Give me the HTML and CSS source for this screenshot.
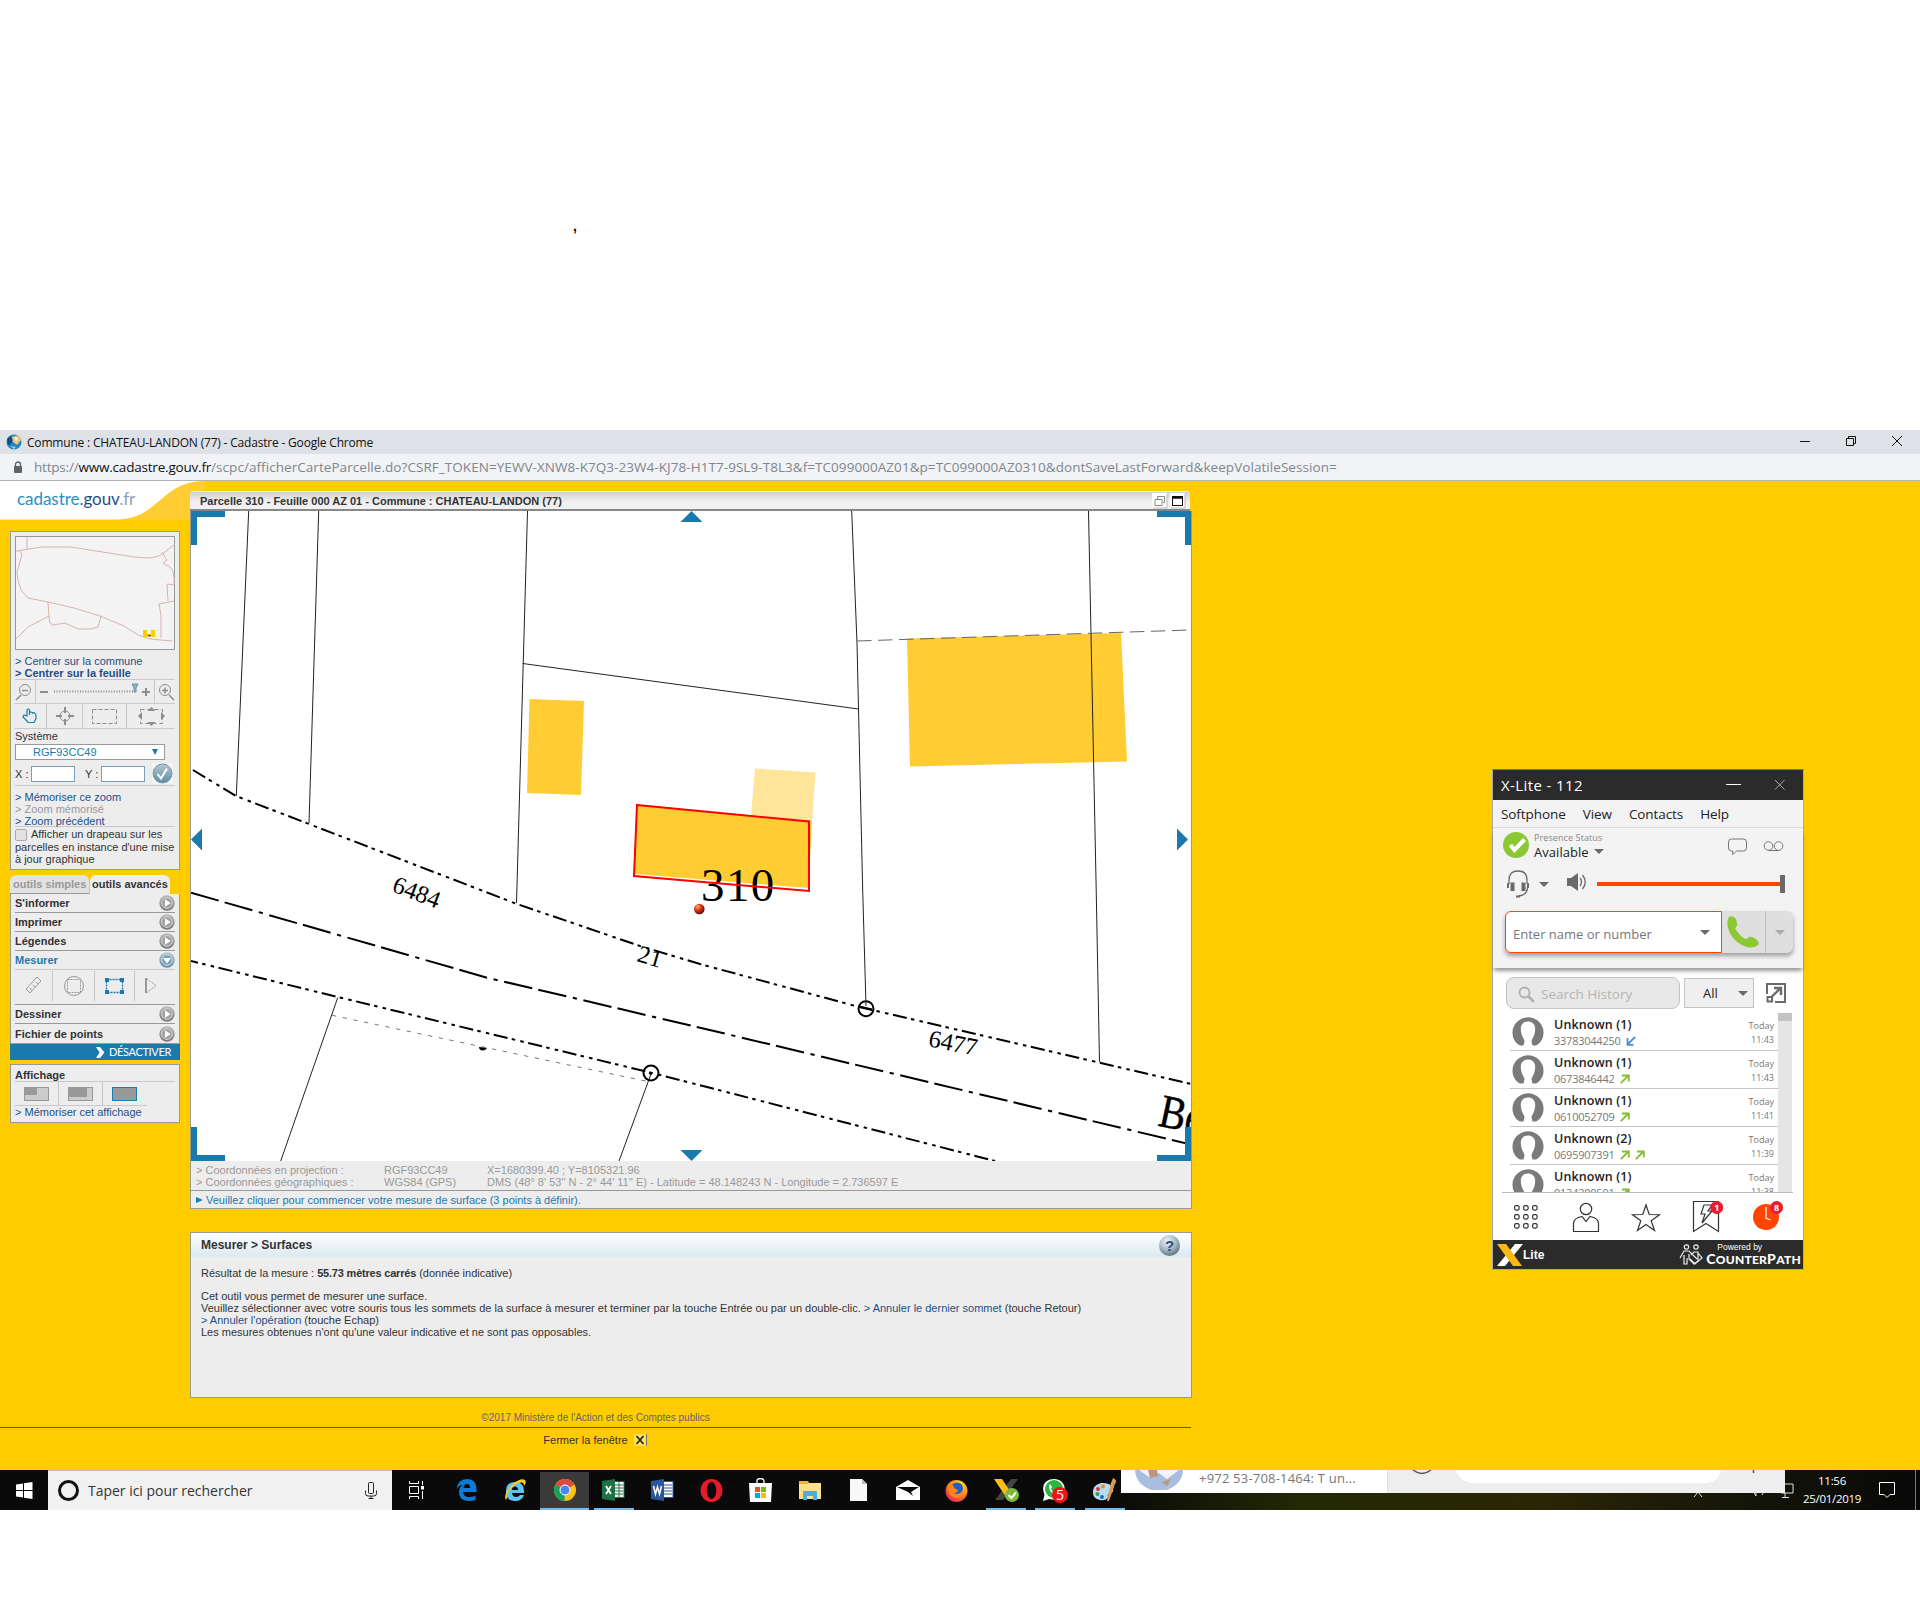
FILE: index.html
```html
<!DOCTYPE html>
<html lang="fr">
<head>
<meta charset="utf-8">
<title>Commune : CHATEAU-LANDON (77) - Cadastre</title>
<link rel="stylesheet" href="styles.css">
</head>
<body>
<svg width="0" height="0" class="defs">
  <defs>
    <linearGradient id="gr" x1="0" y1="0" x2="0" y2="1"><stop offset="0" stop-color="#bbb"/><stop offset="1" stop-color="#777"/></linearGradient>
    <linearGradient id="gb" x1="0" y1="0" x2="0" y2="1"><stop offset="0" stop-color="#b5c9d4"/><stop offset="1" stop-color="#5e8ba5"/></linearGradient>
    <radialGradient id="ball" cx=".35" cy=".3" r=".8"><stop offset="0" stop-color="#ffb090"/><stop offset=".4" stop-color="#e03a10"/><stop offset="1" stop-color="#400"/></radialGradient>
    <radialGradient id="fox" cx=".7" cy=".2" r=".9"><stop offset="0" stop-color="#ffe226"/><stop offset=".5" stop-color="#ff8a16"/><stop offset="1" stop-color="#e5215a"/></radialGradient>
    <radialGradient id="help" cx=".4" cy=".3" r=".8"><stop offset="0" stop-color="#eef3f6"/><stop offset=".5" stop-color="#a9b9c2"/><stop offset="1" stop-color="#4f6470"/></radialGradient>
    <symbol id="play" viewBox="0 0 16 16"><circle cx="8" cy="8" r="7.7" fill="url(#gr)"/><circle cx="8" cy="8" r="5.4" fill="#a2a2a2" stroke="#d5d5d5"/><path d="M6 4.3v7.4L11.6 8z" fill="#fff"/></symbol>
    <symbol id="playdown" viewBox="0 0 16 16"><circle cx="8" cy="8" r="7.7" fill="url(#gb)"/><circle cx="8" cy="8" r="5.4" fill="#7fa3b8" stroke="#cddbe3"/><path d="M4 6h8l-4 5.4z" fill="#fff"/></symbol>
    <symbol id="head" viewBox="0 0 32 30"><path d="M11.5 28.5C12 26 13 24.500 12 22.500C10 19 8.800 16 8.800 12C8.800 7 12 4.500 16 4.500S23.200 7 23.200 12C23.200 16 22 19 20 22.500C19 24.500 20 26 20.500 28.500L24 28.500C29 26 31.500 21 31.500 15.800A15.500 15.500 0 0 0 .5 15.800C.5 21 3 26 8 28.500Z" fill="#7a7a7a"/></symbol>
    <symbol id="out" viewBox="0 0 10 10"><path d="M.8 9.200L8 2M2 1.500h6.800v6" fill="none" stroke="#84bd35" stroke-width="1.800"/></symbol>
    <symbol id="in" viewBox="0 0 10 10"><path d="M9.200.8L2 8M1.500 2v6.800h6" fill="none" stroke="#4a90d0" stroke-width="1.800"/></symbol>
  </defs>
</svg>

<header class="blank"><span class="mark">,</span></header>

<section class="browser">
  <div class="titlebar">
    <svg width="16" height="16" viewBox="0 0 16 16"><circle cx="8" cy="8" r="7.500" fill="#1c86c8"/><path d="M1 5L4 2l3 3-2 5-3 1z" fill="#0b4e86"/><path d="M6 3l7-2 2 5-4 5-4-3z" fill="#f3c37b"/><path d="M8 3l4 1-2 3z" fill="#fff"/><path d="M4 12l6 1-2 2z" fill="#8fd0ef"/></svg>
    <span class="t">Commune : CHATEAU-LANDON (77) - Cadastre - Google Chrome</span>
    <svg class="winbtns" width="110" height="14" viewBox="0 0 110 14" fill="none" stroke="#111" shape-rendering="auto"><path d="M4 7.500h10"/><path d="M50.500 4.500h7v7h-7zM52.500 4.500v-2h7v7h-2"/><path d="M96 2l10 10M106 2L96 12"/></svg>
  </div>
  <div class="urlbar">
    <svg width="10" height="13" viewBox="0 0 10 13"><path d="M2.500 6V3.500a2.500 2.500 0 0 1 5 0V6" fill="none" stroke="#5f6368" stroke-width="1.400"/><rect x="1" y="5" width="8" height="7" rx="1" fill="#5f6368"/></svg>
    <span class="url">https://<b>www.cadastre.gouv.fr</b><span class="path">/scpc/afficherCarteParcelle.do?CSRF_TOKEN=YEWV-XNW8-K7Q3-23W4-KJ78-H1T7-9SL9-T8L3&amp;f=TC099000AZ01&amp;p=TC099000AZ0310&amp;dontSaveLastForward&amp;keepVolatileSession=</span></span>
  </div>

  <div class="page">
    <svg class="swoosh" width="205" height="39" viewBox="0 0 205 39"><path d="M116 39C160 39 160 0 205 0V39z" fill="#ffcc33"/><path d="M0 0H205C160 0 160 38.500 116 38.500H0z" fill="#fff"/></svg>
    <div class="logo"><span class="c1">cadastre</span>.<span class="c2">gouv</span><span class="c3">.fr</span></div>
    <div class="cols">
      <aside>
        <div class="box nav">
          <svg class="mini" width="160" height="114" viewBox="15 536 160 114"><rect x="15.500" y="536.500" width="159" height="113" fill="#f3f3f3" stroke="#999"/><g fill="none" stroke="#d3b5ac"><path d="M27 537v12M16 551l26-4h29l63 10 13 1q11 0 18-6l10-8M20 551l2 3-5 18q0 8 4 18l7 8 20 4 26 6 26 8 24 10 14 9 12 4 22 2M162 552l5 8-4 3 7 4q5 5 4 17M174 585l-7-1 1 17M174 601l-15 3 2 12v22M48 602l1 14-21 11-12 12M49 616q0 8 4 9l12-2 13 6h12l8-2 3-11"/></g><path d="M143 630h4v4h4v-4h4v7h-3l-2-2-3 2h-4z" fill="#fc0"/><path d="M147 635h4l-1 2z" fill="#733"/></svg>
          <div class="lnk l1">&gt; Centrer sur la commune</div>
          <div class="lnk bold">&gt; Centrer sur la feuille</div>
          <svg class="tools" width="160" height="50" viewBox="15 679 160 50" fill="none" stroke="#8d8d8d">
            <path d="M15 679.500h160M15 703.500h160M15 728.500h160M35.500 680v23M154.500 680v23M46.500 704v24M82.500 704v24M126.500 704v24" stroke="#c8c8c8"/>
            <circle cx="25" cy="690" r="5.500"/><path d="M22 690.500h6M21 695l-5 5" stroke-width="1.500"/>
            <circle cx="165" cy="690" r="5.500"/><path d="M162 690.500h6M165 687.500v6M169 695l5 5" stroke-width="1.500"/>
            <path d="M40 692h8M142 692h8M146 688v8" stroke-width="2"/><path d="M54 691.500h80" stroke-width="2" stroke-dasharray="1 1.600"/><path d="M132 684h6l-2 4v4h-2v-4z" fill="#90aebf" stroke="#6d94a8"/>
            <path d="M27 721l-4-4 1-2 3 1v-6q1-2 2.500 0v5-2q1.500-2 3 0 1-1 2.500.5 1 0 1 2v3l-2 4h-6z" stroke="#1a7aad" stroke-width="1.200"/>
            <circle cx="65" cy="716" r="5"/><path d="M65 707v6M65 719v6M56 716h6M68 716h6" stroke-width="2"/>
            <rect x="92.500" y="709.500" width="24" height="14" stroke-dasharray="4 2"/><rect x="140.500" y="709.500" width="22" height="14" stroke-dasharray="4 3"/>
            <path d="M151.500 707l-4 4h8zM151.500 726l-4-4h8zM138 716l4-4v8zM165 716l-4-4v8z" fill="#8d8d8d" stroke="none"/>
          </svg>
          <div class="sys">Système</div>
          <div class="select"><span>RGF93CC49</span><i></i></div>
          <div class="xy"><span class="lx">X :</span><i></i><span class="ly">Y :</span><i></i><svg width="21" height="21" viewBox="0 0 21 21"><rect width="21" height="21" fill="#f6f6f6"/><circle cx="10.500" cy="10.500" r="9.500" fill="url(#gb)" stroke="#7895a5"/><path d="M5.500 11l3.500 4.500 6-10" fill="none" stroke="#fff" stroke-width="2"/></svg></div>
          <div class="mem"><div class="lnk">&gt; Mémoriser ce zoom</div><div class="lnk off">&gt; Zoom mémorisé</div><div class="lnk">&gt; Zoom précédent</div></div>
          <div class="flag"><i></i>Afficher un drapeau sur les<br>parcelles en instance d'une mise<br>à jour graphique</div>
        </div>
        <div class="tabs"><span class="tab dim">outils simples</span><span class="tab">outils avancés</span></div>
        <div class="box adv">
          <div class="row">S'informer<svg width="16" height="16"><use href="#play"/></svg></div>
          <div class="row">Imprimer<svg width="16" height="16"><use href="#play"/></svg></div>
          <div class="row">Légendes<svg width="16" height="16"><use href="#play"/></svg></div>
          <div class="row on">Mesurer<svg width="16" height="16"><use href="#playdown"/></svg></div>
          <svg class="meas" width="160" height="34" viewBox="15 969 160 34" fill="none" stroke="#999"><path d="M52.500 970v30M94.500 970v30M134.500 970v30" stroke="#c8c8c8"/><path d="M26 988l11-12 4 4-11 12zM30 987l2 2M33 984l2 2M36 981l2 2"/><circle cx="74" cy="985" r="9.500"/><rect x="67.500" y="978.500" width="13" height="13" stroke-dasharray="2 1"/><rect x="106.500" y="978.500" width="16" height="13" stroke="#1a7aad" stroke-width="1.300" stroke-dasharray="2 1"/><path d="M105 977h4v4h-4zM120 977h4v4h-4zM105 989h4v4h-4zM120 989h4v4h-4z" fill="#1a7aad" stroke="none"/><path d="M146 977v15" stroke-width="2"/><path d="M147 978l9 6.500-9 7" stroke-dasharray="2 1"/></svg>
          <div class="row top">Dessiner<svg width="16" height="16"><use href="#play"/></svg></div>
          <div class="row last">Fichier de points<svg width="16" height="16"><use href="#play"/></svg></div>
        </div>
        <div class="desact"><svg width="9" height="11" viewBox="0 0 9 11"><path d="M0 0h4l4.500 5.500L4 11H0l3.500-5.500z" fill="#fff"/></svg>DÉSACTIVER</div>
        <div class="box aff">
          <div class="afft">Affichage</div>
          <svg width="160" height="25" viewBox="15 1081 160 25"><path d="M15 1081.500h160M15 1105.500h132M58.500 1082v24M102.500 1082v24" stroke="#c8c8c8"/><g fill="#ccc" stroke="#999"><rect x="24.500" y="1087.500" width="24" height="13"/><rect x="68.500" y="1087.500" width="24" height="13"/></g><path d="M24 1087h13v8H24zM68 1087h19v10H68z" fill="#999"/><rect x="112.500" y="1087.500" width="24" height="13" fill="#999" stroke="#1a7aad"/></svg>
          <div class="lnk">&gt; Mémoriser cet affichage</div>
        </div>
      </aside>

      <main>
        <div class="maphead"><b>Parcelle 310 - Feuille 000 AZ 01 - Commune : CHATEAU-LANDON (77)</b>
          <svg width="34" height="16" viewBox="0 0 34 16"><rect width="15" height="15" fill="#fff"/><rect x="18" width="15" height="15" fill="#fff"/><path d="M15 1v14H1M33 1v14H19" fill="none" stroke="#bbb"/><path d="M3 6.500h7v6H3zM5.500 6V3.500h7v6H11" fill="none" stroke="#888"/><rect x="20.500" y="3.500" width="10" height="9" fill="none" stroke="#111"/><path d="M20 4.500h11" stroke="#111" stroke-width="2.500"/></svg>
        </div>
        <div class="mapwrap">
          <svg class="map" width="1000" height="650" viewBox="191 511 1000 650">
            <g fill="#ffcc33"><path d="M529.500 699L584 701 581 795 527 793z"/><path d="M907 638.500L1121 633 1127 761.500 910 766.500z"/><path d="M755 768.500L815.500 772.500 812 822 751 815z" fill="#ffe599"/><path d="M637 805L812 821 808.500 888 634.500 874z"/></g>
            <g fill="none" stroke="#222" stroke-width="1"><path d="M248.700 511L236.300 796M318.700 511L309 823M527.500 511L516.500 903M522.700 663.500L858.500 709M851.700 511L857 643 858.500 709 862.700 890 866 1006M1088.500 511L1096 880 1099.500 1062M337.700 997.700L280.700 1161M651 1074L619 1161"/>
              <path d="M857 641L1190 630" stroke="#666" stroke-dasharray="14.500 6.500"/><path d="M332 1015.300L646.700 1081.300" stroke="#777" stroke-dasharray="4.300 6.600"/></g>
            <g fill="none" stroke="#000" stroke-width="2">
              <path d="M193 770L236 796 309 824 517 904 640 946 700 964 858 1006.700 1098 1062.300 1191 1084" stroke-dasharray="14.200 4.300 3.500 5.300 3.500 4.600"/>
              <path d="M191 892.700L487 977.700 700 1027.700 1191 1144.500" stroke-dasharray="28.800 6.200 28.800 6.700 4.200 6.700"/>
              <path d="M191 961L336.700 996.700 651 1072.700 995 1161" stroke-dasharray="14.200 4.300 3.500 5.300 3.500 4.600" stroke-dashoffset="7"/>
              <circle cx="651" cy="1073" r="7.500"/><circle cx="866" cy="1008.700" r="7.500"/><path d="M859 1006.500l13 3M649 1073l3 1"/></g>
            <path d="M479 1047l8 1q-2 3-5 2.500-3-1-3-3.500z"/>
            <g class="maptext"><text font-size="47" letter-spacing="1.400" x="701" y="901">310</text><text font-size="24.500" transform="translate(391 891) rotate(21)">6484</text><text font-size="24.500" transform="translate(636 961) rotate(16)">21</text><text font-size="24.500" transform="translate(927.500 1046) rotate(11.500)">6477</text><text font-size="47" stroke="#000" stroke-width=".5" transform="translate(1157 1125.500) rotate(12) scale(.84 1)">Be</text></g>
            <path d="M637 805L809 821.500V891L634 876z" fill="none" stroke="#f00" stroke-width="2"/>
            <circle cx="699.300" cy="909" r="5.300" fill="url(#ball)"/>
            <path fill="#1a7aad" d="M191 511h34v6h-28v28h-6zM1157 511h34v34h-6v-28h-28zM191 1127h6v28h28v6h-34zM1185 1127h6v34h-34v-6h28zM691.500 511l11 11h-22zM691.500 1161l11-11h-22zM191 839.500l11-11v22zM1188 839.500l-11-11v22z"/>
          </svg>
          <div class="coords"><span>&gt; Coordonnées en projection :</span><span>RGF93CC49</span><span>X=1680399.40 ; Y=8105321.96</span><span>&gt; Coordonnées géographiques :</span><span>WGS84 (GPS)</span><span>DMS (48° 8' 53'' N - 2° 44' 11'' E) - Latitude = 48.148243 N - Longitude = 2.736597 E</span></div>
          <div class="hint"><i></i>Veuillez cliquer pour commencer votre mesure de surface (3 points à définir).</div>
        </div>
        <div class="result">
          <div class="rhead"><b>Mesurer &gt; Surfaces</b><svg width="23" height="23" viewBox="0 0 23 23"><circle cx="11.500" cy="11.500" r="10.500" fill="url(#help)"/><text x="7" y="17" font-size="15" font-weight="bold" fill="#1d4f86">?</text></svg></div>
          <div class="rbody">
            <p>Résultat de la mesure : <b>55.73 mètres carrés</b> (donnée indicative)</p>
            <p class="sp">Cet outil vous permet de mesurer une surface.</p>
            <p class="long">Veuillez sélectionner avec votre souris tous les sommets de la surface à mesurer et terminer par la touche Entrée ou par un double-clic. <a>&gt; Annuler le dernier sommet</a> (touche Retour)</p>
            <p><a>&gt; Annuler l'opération</a> (touche Echap)</p>
            <p>Les mesures obtenues n'ont qu'une valeur indicative et ne sont pas opposables.</p>
          </div>
        </div>
      </main>
    </div>
    <div class="copy">©2017 Ministère de l'Action et des Comptes publics</div>
    <div class="close">Fermer la fenêtre<svg width="14" height="12" viewBox="0 0 14 12"><rect width="13" height="12" fill="#ffdf5a"/><path d="M2.500 2l7 8M9.500 2l-7 8" stroke="#222" stroke-width="1.700"/><path d="M12.500 0v12" stroke="#776"/></svg></div>
  </div>
</section>

<section class="xlite">
  <div class="xtitle"><span>X-Lite - 112</span><svg width="60" height="12" viewBox="0 0 60 12" fill="none"><path d="M0 5.500h15" stroke="#fff"/><path d="M49 1l9.500 9.500M58.500 1L49 10.500" stroke="#aaa"/></svg></div>
  <div class="xmenu"><span>Softphone</span><span>View</span><span>Contacts</span><span>Help</span></div>
  <div class="xtop">
    <div class="pres">
      <svg width="26" height="26" viewBox="0 0 26 26"><circle cx="13" cy="13" r="13" fill="#8bc834"/><path d="M7.500 13l4 5 10-10.500" fill="none" stroke="#fff" stroke-width="4"/></svg>
      <div class="ptxt"><small>Presence Status</small><span>Available<i class="dn"></i></span></div>
      <svg class="pi" width="56" height="18" viewBox="0 0 56 18" fill="none" stroke="#777"><path d="M3.500 1h12q3 0 3 3v6q0 3-3 3h-7l-4 3.500.3-3.500H3.500q-3 0-3-3V4q0-3 3-3z"/><circle cx="40.500" cy="8" r="4.300"/><circle cx="50.500" cy="8" r="4.300"/><path d="M40 12.500h11"/></svg>
    </div>
    <div class="vol">
      <svg width="22" height="28" viewBox="0 0 22 28" fill="none" stroke="#6a6a6a"><path d="M2 14V10q0-9 9-9t9 9v4" stroke-width="1.300"/><path d="M20.500 17q0 8-9 9" stroke-width="1.300"/><rect x="4" y="13" width="3" height="7.500" fill="#6a6a6a"/><rect x="15" y="13" width="3" height="7.500" fill="#6a6a6a"/><path d="M1 13v5M21 13v5M9 26.500h4" stroke-width="2"/></svg>
      <i class="dn"></i>
      <svg class="spk" width="20" height="20" viewBox="0 0 20 20"><path d="M0 6h4l7-5v18l-7-5H0z" fill="#6a6a6a"/><path d="M13 6q3 4 0 8M15.500 3q5.500 7 0 14" fill="none" stroke="#6a6a6a" stroke-width="1.300"/></svg>
      <div class="bar"></div><div class="knob"></div>
    </div>
    <div class="dial"><div class="inp">Enter name or number<i class="dn"></i></div><div class="call"><svg width="33" height="32" viewBox="0 0 33 32"><path d="M2 1q4-2 7 2l1.500 6q-3 3-2 4 4 7 10 10 2 0 3.500-2 3-1 8 3 3 3 1 5-7 5-16 0Q3 23 .5 10 0 3 2 1z" fill="#8bc834"/></svg></div><div class="calld"><i class="dn lt"></i></div></div>
  </div>
  <div class="hist">
    <div class="search"><div class="sin"><svg width="17" height="17" viewBox="0 0 17 17" fill="none" stroke="#b0b0b0"><circle cx="6.500" cy="6.500" r="5" stroke-width="1.800"/><path d="M10 10l6 6" stroke-width="2.500"/></svg>Search History</div><div class="all">All<i class="dn"></i></div><svg width="20" height="20" viewBox="0 0 20 20" fill="none" stroke="#6a6a6a" stroke-width="2"><path d="M1 11V1h18v18H9"/><rect x="1.500" y="14" width="4.500" height="4.500"/><path d="M6 13.500l8.500-8.500M8 5h7v7" stroke-width="2.400"/></svg></div>
    <div class="list">
      <div class="items">
        <div class="it"><svg width="32" height="30"><use href="#head"/></svg><div class="who"><b>Unknown (1)</b><span>33783044250 <svg width="10" height="10"><use href="#in"/></svg></span></div><div class="when">Today<br>11:43</div></div>
        <div class="it"><svg width="32" height="30"><use href="#head"/></svg><div class="who"><b>Unknown (1)</b><span>0673846442 <svg width="10" height="10"><use href="#out"/></svg></span></div><div class="when">Today<br>11:43</div></div>
        <div class="it"><svg width="32" height="30"><use href="#head"/></svg><div class="who"><b>Unknown (1)</b><span>0610052709 <svg width="10" height="10"><use href="#out"/></svg></span></div><div class="when">Today<br>11:41</div></div>
        <div class="it"><svg width="32" height="30"><use href="#head"/></svg><div class="who"><b>Unknown (2)</b><span>0695907391 <svg width="10" height="10"><use href="#out"/></svg> <svg width="10" height="10"><use href="#out"/></svg></span></div><div class="when">Today<br>11:39</div></div>
        <div class="it"><svg width="32" height="30"><use href="#head"/></svg><div class="who"><b>Unknown (1)</b><span>0134200591 <svg width="10" height="10"><use href="#out"/></svg></span></div><div class="when">Today<br>11:38</div></div>
      </div>
      <div class="sb"><i></i></div>
    </div>
    <svg class="xnav" width="310" height="47" viewBox="1493 1193 310 47" fill="none" stroke="#333" stroke-width="1.200"><g><rect x="1514.600" y="1205.600" width="4.500" height="4.500" rx="1.500"/><rect x="1523.600" y="1205.600" width="4.500" height="4.500" rx="1.500"/><rect x="1532.600" y="1205.600" width="4.500" height="4.500" rx="1.500"/><rect x="1514.600" y="1214.600" width="4.500" height="4.500" rx="1.500"/><rect x="1523.600" y="1214.600" width="4.500" height="4.500" rx="1.500"/><rect x="1532.600" y="1214.600" width="4.500" height="4.500" rx="1.500"/><rect x="1514.600" y="1223.600" width="4.500" height="4.500" rx="1.500"/><rect x="1523.600" y="1223.600" width="4.500" height="4.500" rx="1.500"/><rect x="1532.600" y="1223.600" width="4.500" height="4.500" rx="1.500"/></g><circle cx="1586" cy="1209" r="5.700"/><path d="M1582 1216.500q-8.500 1.500-8.500 7v8h25v-8q0-5.500-8.500-7l-4 5z"/><path d="M1646 1205l3.200 9.500 10.300.2-8.300 6 3.300 9.800-8.500-6-8.500 6 3.300-9.800-8.300-6 10.300-.2z"/><path d="M1693.500 1201.500h25v30l-12.500-8-12.500 8zM1704 1205h8l-4 6h4l-10 12 3-9h-4z"/><circle cx="1766" cy="1217" r="13" fill="#ff4500" stroke="none"/><path d="M1766 1207v11l4.500 2" stroke="#fff"/><g stroke="none"><circle cx="1716.700" cy="1207.500" r="6.500" fill="#ed1c2e"/><circle cx="1776.600" cy="1207.500" r="6.500" fill="#ed1c2e"/><g fill="#fff" font-size="9" font-weight="bold"><text x="1714.200" y="1210.800">1</text><text x="1774" y="1210.800">8</text></g></g></svg>
  </div>
  <div class="xfoot"><svg width="27" height="22" viewBox="0 0 27 22"><path d="M18 0h8L8 22H0z" fill="#fff"/><path d="M0 0h9l16 22h-9z" fill="#fbb813"/></svg><span class="lite">Lite</span>
    <svg class="cp" width="24" height="22" viewBox="0 0 24 22" fill="none" stroke="#eee" stroke-width="1.200"><circle cx="7.500" cy="3" r="2.200"/><circle cx="17" cy="3" r="2.200"/><path d="M1 14l4-7h5l8 8M5 11v9h3v-6M10 10v5l5 5 4-3V8h-4l-3 3M19 9l4 5-7 6-5-5"/></svg><div class="cpt"><small>Powered by</small><b>C<span>OUNTER</span>P<span>ATH</span></b></div></div>
</section>

<footer class="taskbar">
  <div class="start"><svg width="17" height="17" viewBox="0 0 17 17" fill="#fff"><path d="M0 2.400L7 1.400V8H0zM8 1.200L16.500 0V8H8zM0 9h7v6.600l-7-1zM8 9h8.500v8L8 15.800z"/></svg></div>
  <div class="tsearch"><i></i><span>Taper ici pour rechercher</span><svg width="12" height="18" viewBox="0 0 12 18" fill="none" stroke="#222"><rect x="3.500" y=".5" width="5" height="11" rx="1"/><path d="M.5 8.500v3q0 2.500 2.500 2.500h6q2.500 0 2.500-2.500v-3M6 14v3M3.500 16.500h5"/></svg></div>
  <div class="apps">
    <div class="app"><svg width="18" height="18" viewBox="0 0 18 18" fill="none" stroke="#fff"><path d="M1.500 0v2.500h9V0M1.500 18v-2.500h9V18M1.500 5.500h9v7h-9zM14.500 0v4M14.500 10v8"/><path d="M13 5h3v3.500h-3z" fill="#fff" stroke="none"/></svg></div>
    <div class="app"><svg width="21" height="22" viewBox="0 0 21 22"><path d="M.5 10Q2 0 11 0q9 0 9.500 9v4H7q.5 5 6 5 4 0 6.500-1.500v4Q17 22 13 22 3 22 3 13q0-5 4-7-4 0-6.500 4zM7.500 9H14q0-4-3-4t-3.500 4z" fill="#0c7bd6" fill-rule="evenodd"/></svg></div>
    <div class="app"><svg width="24" height="24" viewBox="0 0 24 24"><path d="M3 13q0-9 9-9t9 9v2H9q.5 4 4 4 3 0 4-2h4q-2 6-9 6-9 0-9-10zm6-1h6q0-3.500-3-3.500T9 12z" fill="#5cc4f2" fill-rule="evenodd"/><path d="M3 22C-2 16 15-3 22 2q2 2-1 6 0-5-5-3C10 7 3 15 4 20z" fill="#fdc92b"/></svg></div>
    <div class="app act"><svg width="22" height="22" viewBox="0 0 22 22"><circle cx="11" cy="11" r="11" fill="#fbc116"/><path d="M11 11L1.500 5.500A11 11 0 0 1 20.500 5.500z" fill="#dd4b3e"/><path d="M11 11L1.500 5.500A11 11 0 0 0 10.500 22z" fill="#17a05e"/><circle cx="11" cy="11" r="5" fill="#4688f1" stroke="#fff"/></svg></div>
    <div class="app run"><svg width="23" height="22" viewBox="0 0 23 22"><rect x="11" y="2.500" width="11" height="16" fill="#fff" stroke="#1e7145"/><path d="M13 6h8M13 9h8M13 12h8M13 15h8M17 3v15" stroke="#1e7145"/><path d="M0 2L13 0v22L0 20z" fill="#1e7145"/><path d="M4 7l5 8M9 7l-5 8" stroke="#fff" stroke-width="1.800"/></svg></div>
    <div class="app"><svg width="23" height="22" viewBox="0 0 23 22"><rect x="11" y="2.500" width="11" height="16" fill="#fff" stroke="#2b579a"/><path d="M13 6h8M13 9h8M13 12h8M13 15h8" stroke="#2b579a"/><path d="M0 2L13 0v22L0 20z" fill="#2b579a"/><path d="M2.500 7l2 8L6.500 8l2 7 2-8" stroke="#fff" stroke-width="1.500" fill="none"/></svg></div>
    <div class="app"><svg width="23" height="23" viewBox="0 0 23 23"><ellipse cx="11.500" cy="11.500" rx="11" ry="11.500" fill="#e31b2b"/><ellipse cx="11.500" cy="11.500" rx="4.800" ry="8.500" fill="#0a0a0a"/></svg></div>
    <div class="app"><svg width="23" height="24" viewBox="0 0 23 24"><path d="M8 6V3q0-2.500 3.500-2.500T15 3v3" fill="none" stroke="#fff" stroke-width="1.300"/><path d="M0 5h23l-1 19H1z" fill="#fff"/><path d="M6 9h5v5H6z" fill="#f25022"/><path d="M12 9h5v5h-5z" fill="#7fba00"/><path d="M6 15h5v5H6z" fill="#00a4ef"/><path d="M12 15h5v5h-5z" fill="#ffb900"/></svg></div>
    <div class="app"><svg width="22" height="20" viewBox="0 0 22 20"><path d="M0 1h9l1 2h12v16H0z" fill="#ffe08a"/><path d="M0 1h9v3H0z" fill="#f2b632"/><path d="M4 20v-8q0-1 1-1h12q1 0 1 1v8h-4v-4H8v4z" fill="#3fb2ee"/></svg></div>
    <div class="app"><svg width="17" height="22" viewBox="0 0 17 22"><path d="M0 0h12l5 5v17H0z" fill="#f8f8f8"/><path d="M12 0v5h5z" fill="#bbb"/></svg></div>
    <div class="app"><svg width="24" height="20" viewBox="0 0 24 20"><path d="M0 7l12-7 12 7v13H0z" fill="#fff"/><path d="M1 7h22l-8 5 2 4-5-4z" fill="#0a0a0a"/></svg></div>
    <div class="app"><svg width="23" height="23" viewBox="0 0 23 23"><circle cx="11.500" cy="12" r="11" fill="url(#fox)"/><circle cx="12" cy="9.500" r="6" fill="#2160c0"/><path d="M3 5q6 0 6 4l4 2q-1 3-4 3 5 3 9-3 0 8-7 8-9-2-8-14z" fill="#ff8518"/></svg></div>
    <div class="app run"><svg width="25" height="24" viewBox="0 0 25 24"><path d="M17 1h7L9 22H1z" fill="#444"/><path d="M0 1h8l14 21h-8z" fill="#fcbc1c"/><circle cx="18" cy="17" r="7" fill="#7cba3b"/><path d="M14.500 17l3 3 4.500-5.500" stroke="#fff" stroke-width="2" fill="none"/></svg></div>
    <div class="app run"><svg width="26" height="25" viewBox="0 0 26 25"><path d="M1 23l1.500-6Q-2 5 8 1.500 18-1 22 7q3 10-6 14-4 1-9 0z" fill="#fff"/><circle cx="12" cy="11" r="9" fill="#2ab540"/><path d="M8 6l2 3-1 2q2 4 5 4l2-1.500 2 1.500q-2 3-5 2Q7 14 7 8z" fill="#fff"/><circle cx="18" cy="17" r="8" fill="#f01414"/><text x="14" y="22" font-size="14" fill="#fff">5</text></svg></div>
    <div class="app run"><svg width="25" height="24" viewBox="0 0 25 24"><path d="M1 16Q0 7 9 5q10-1 12 6 1 4-3 4-3 1-2 4-2 4-8 3-6-1-7-6z" fill="#b6dcf1"/><circle cx="6" cy="11" r="2" fill="#d33"/><circle cx="11" cy="8.500" r="2" fill="#e8872e"/><circle cx="5.500" cy="16" r="2" fill="#3b9b45"/><circle cx="10" cy="19" r="2" fill="#2f65b8"/><path d="M21 0q5 2 2 6l-6 17q-2 1-2-1l4-17z" fill="#d79a52"/></svg></div>
  </div>
  <div class="tray"><svg width="110" height="20" viewBox="0 0 110 20" fill="none" stroke="#ddd"><path d="M1 14l4-5 4 5M60 8l3 5v-5M69 12l3-5M84 5V1h16v9H88M92 10v4M89 14.500h7"/></svg></div>
  <div class="clock">11:56<br>25/01/2019</div>
  <svg class="notif" width="16" height="16" viewBox="0 0 16 16" fill="none" stroke="#fff"><path d="M.5.500h15v12H11l-3 3-3-3H.5z"/></svg>
  <div class="chat">
    <div class="chat1"><svg width="50" height="20" viewBox="0 0 50 20"><path d="M1 0a24 21 0 0 0 48 0z" fill="#a9bde0"/><path d="M5 0l10 7 10-4 8 6 12-9z" fill="#f1f5fb"/><path d="M14 0h9l1 6-8 2zM28 12l9-3-4 7z" fill="#c09478"/></svg><span>+972 53-708-1464: T un...</span></div>
    <div class="chat2"><svg width="398" height="23" viewBox="1387 1470 398 23"><path d="M1412 1470q9 7 18 0" fill="none" stroke="#555" stroke-width="1.500"/><path d="M1455 1470q4 13 18 13h230q14 0 17-13z" fill="#fff"/><path d="M1752.500 1470v3" stroke="#555" stroke-width="1.500"/></svg></div>
  </div>
</footer>
</body>
</html>
```
FILE: styles.css
```css
* { box-sizing: border-box; }
body { margin: 0; width: 1920px; height: 1600px; background: #fff; position: relative; overflow: hidden; font-family: "Liberation Sans", Arial, sans-serif; color: #333; white-space: nowrap; }
svg { display: block; flex: none; }
i { font-style: normal; }
.defs { position: absolute; }
.blank { height: 430px; padding: 217px 0 0 573px; }
.mark { font: bold 14px/18px "Liberation Sans", sans-serif; color: #000; }

.titlebar { height: 24px; background: #dee1e6; display: flex; align-items: center; padding-left: 6px; font: 12px "Open Sans", "Noto Sans", sans-serif; color: #111; }
.titlebar .t { margin-left: 5px; letter-spacing: -0.19px; }
.winbtns { margin: 0 14px 3px auto; }
.urlbar { height: 27px; background: #f1f3f6; border-bottom: 1px solid #b3b3b3; display: flex; align-items: center; padding-left: 13px; font: 13.500px "Open Sans", "Noto Sans", sans-serif; color: #80868b; }
.url { margin-left: 11px; letter-spacing: -0.2px; }
.url b { font-weight: 400; color: #111; }
.url .path { letter-spacing: 0.055px; }

.page { height: 989px; background: #fc0; position: relative; }
.swoosh { position: absolute; left: 0; top: 0; }
.logo { position: absolute; left: 17px; top: 7px; font: 400 17px/22px Lato, sans-serif; color: #1a7aad; letter-spacing: -0.05px; }
.c1 { color: #2a8fc0; }
.c2 { color: #1d4f86; }
.c3 { color: #8aa4bd; }
.cols { display: grid; grid-template-columns: 190px 1001px; position: relative; }
aside { padding: 50px 10px 0; font-size: 11px; line-height: 12px; }
.box { width: 170px; background: #ededed; border: 1px solid #999; padding: 0 4px; }
.nav { height: 339px; padding-top: 4px; }
.lnk { color: #1d4f86; height: 12px; letter-spacing: 0; }
.l1 { margin-top: 5px; }
.bold { font-weight: bold; }
.off { color: #999; }
.tools { margin-top: 0; }
.sys { height: 15px; line-height: 15px; }
.select { width: 150px; height: 16px; background: #fff; border: 1px solid #999; display: flex; justify-content: space-between; align-items: center; padding: 0 6px 0 17px; color: #1a7aad; }
.select i { border: 3.500px solid transparent; border-top: 6px solid #1a7aad; border-bottom: 0; }
.xy { height: 26px; padding-top: 2px; display: flex; align-items: center; border-bottom: 1px solid #c8c8c8; }
.xy i { width: 44px; height: 16px; background: #fff; border: 1px solid #7b9ebd; }
.xy .lx { width: 16px; }
.xy .ly { width: 16px; margin-left: 10px; }
.xy svg { margin-left: 7px; }
.mem { height: 41px; padding-top: 5px; border-bottom: 1px solid #c8c8c8; }
.flag { line-height: 12px; padding-top: 1px; }
.flag i { display: inline-block; width: 12px; height: 12px; border: 1px solid #aaa; border-radius: 2px; background: #e2e2e2; vertical-align: -3px; margin-right: 4px; }
.tabs { display: flex; margin-top: 5px; height: 19px; width: 170px; }
.tab { height: 19px; width: 80px; padding: 0 2px; line-height: 18px; background: #ededed; border-radius: 6px 6px 0 0; font-weight: bold; border-bottom: 1px solid #ededed; margin-left: 1px; }
.tab.dim { width: 79px; margin: 0; padding-left: 3px; color: #999; border-color: #999; background: #e2e2e2; }
.adv { height: 150px; border-top: 0; }
.row { height: 19px; display: flex; justify-content: space-between; align-items: center; border-bottom: 1px solid #999; font-weight: bold; }
.on { color: #1a7aad; border-color: #c8c8c8; }
.meas { height: 34px; }
.top { border-top: 1px solid #999; height: 20px; }
.last { border: 0; }
.desact { width: 170px; height: 16px; background: #1a7aad; color: #fff; font: 11px/16px Lato, sans-serif; letter-spacing: -0.35px; display: flex; justify-content: flex-end; align-items: center; gap: 4px; padding-right: 9px; }
.aff { margin-top: 4px; height: 59px; }
.afft { height: 16px; line-height: 20px; font-weight: bold; }

main { padding-top: 10px; }
.maphead { width: 1000px; height: 20px; display: flex; align-items: center; justify-content: space-between; padding: 0 4px 0 10px; font-size: 11px; border-radius: 4px 4px 0 0; border-top: 1px solid #eee; border-bottom: 2px solid #888; background: linear-gradient(#cfcfcf, #f1f1f1 60%); }
.mapwrap { width: 1002px; border: 1px solid #999; border-top: 0; background: #ededed; height: 698px; }
.map { background: #fff; }
.maptext { font-family: "Liberation Serif", serif; }
.coords { height: 29px; display: grid; grid-template-columns: 188px 103px auto; grid-auto-rows: 12px; justify-content: start; padding: 3px 0 0 5px; font-size: 11px; line-height: 12px; color: #999; }
.hint { border-top: 1px solid #999; height: 18px; display: flex; align-items: center; padding-left: 5px; color: #1a7aad; font-size: 11px; }
.hint i { border: 3.500px solid transparent; border-left: 7px solid #1a7aad; border-right: 0; margin-right: 3px; }
.result { margin-top: 23px; width: 1002px; height: 166px; background: #ededed; border: 1px solid #999; font-size: 11px; line-height: 12px; }
.rhead { height: 24px; display: flex; justify-content: space-between; align-items: center; padding: 0 10px 0 10px; background: linear-gradient(#fff, #dbe9f1); font-size: 12px; }
.rbody { padding: 10px; }
.rbody p { margin: 0; height: 12px; }
.rbody p b { letter-spacing: -0.2px; }
.rbody .sp { margin-top: 11px; }
.rbody a { color: #1d4f86; }
.copy { width: 1191px; height: 30px; margin-top: 0; border-bottom: 1px solid #555; text-align: center; font-size: 10px; line-height: 39px; color: #666; }
.close { width: 1191px; display: flex; justify-content: center; align-items: center; gap: 6px; height: 24px; font-size: 11px; }

.xlite { position: absolute; left: 1492px; top: 769px; width: 312px; height: 501px; border: 1px solid #a9a9a9; border-top-color: #777; background: #fff; font: 13px "Open Sans", "Noto Sans", sans-serif; color: #222; }
.xtitle { height: 30px; background: #2b2b2b; color: #fff; display: flex; justify-content: space-between; align-items: center; padding: 0 17px 0 8px; font-size: 15px; letter-spacing: 0.4px; }
.xmenu { height: 28px; background: #f3f3f3; border-bottom: 1px solid #ddd; display: flex; gap: 17px; align-items: center; padding-left: 8px; font-size: 13.500px; letter-spacing: -0.08px; }
.xtop { height: 140px; background: #f3f3f3; box-shadow: 0 4px 4px -1px rgba(0,0,0,.4); position: relative; }
.dn { display: inline-block; border: 5px solid transparent; border-top: 5px solid #6a6a6a; border-bottom: 0; }
.lt { border-top-color: #aaa; }
.pres { display: flex; height: 37px; padding: 4px 19px 0 10px; }
.ptxt { margin-left: 5px; display: flex; flex-direction: column; }
.ptxt small { font-size: 9px; line-height: 12px; color: #888; letter-spacing: 0.1px; }
.ptxt span { line-height: 16px; letter-spacing: 0.05px; }
.ptxt .dn { margin: 0 0 3px 5px; }
.pi { margin: 6px 0 0 auto; }
.vol { display: flex; align-items: center; height: 34px; margin-top: 2px; padding: 0 18px 0 14px; }
.vol .dn { margin: 0 18px 0 10px; }
.spk { margin-bottom: 4px; }
.bar { margin-left: 10px; flex: 1; height: 4px; background: #ff4500; }
.knob { width: 5px; height: 18px; background: #6a6a6a; }
.dial { display: flex; margin: 10px 10px 0 12px; height: 42px; border-radius: 6px; box-shadow: 0 3px 4px rgba(0,0,0,.35); background: #dfdfdf; }
.inp { width: 217px; background: #fff; border: 1px solid #ff4500; border-radius: 6px 0 0 6px; display: flex; align-items: center; justify-content: space-between; padding: 3px 11px 0 7px; color: #777; font-size: 13px; }
.inp .dn { margin-bottom: 3px; }
.call { width: 44px; display: flex; align-items: center; justify-content: center; border-right: 1px solid #bbb; }
.calld { flex: 1; display: flex; align-items: center; justify-content: center; }
.search { display: flex; align-items: center; padding: 9px 17px 0 13px; height: 41px; }
.sin { width: 174px; height: 32px; border: 1px solid #c3c3c3; border-radius: 8px; background: #e8e8e8; display: flex; align-items: center; gap: 6px; padding-left: 11px; color: #b5b5b5; font-size: 13.500px; padding-top: 2px; }
.all { width: 70px; height: 30px; margin: 0 12px 0 4px; border: 1px solid #c3c3c3; background: #efefef; display: flex; align-items: center; justify-content: space-between; padding: 0 5px 0 18px; }
.list { margin: 4px 10px 0 9px; height: 180px; border-bottom: 1px solid #bbb; display: flex; overflow: hidden; padding-left: 8px; }
.items { width: 268px; height: 179px; overflow: hidden; }
.it { height: 38px; display: flex; align-items: center; border-bottom: 1px solid #c5c5c5; padding: 0 4px 0 2px; }
.who { margin-left: 10px; padding-top: 2px; flex: 1; line-height: 16px; letter-spacing: 0.1px; }
.who b { display: block; font-weight: 600; font-size: 12.500px; }
.who span { display: flex; gap: 5px; align-items: center; font-size: 11px; color: #777; letter-spacing: -0.24px; }
.when { padding-top: 2px; font-size: 9px; line-height: 14px; color: #777; text-align: right; }
.sb { width: 14px; background: #e5e5e5; height: 179px; }
.sb i { display: block; height: 8px; background: #c3c3c3; }
.xfoot { height: 29px; background: #2b2b2b; display: flex; align-items: center; padding: 0 2px 0 4px; color: #fff; }
.lite { font: bold 12px "Liberation Sans", sans-serif; margin-left: -1px; margin-right: auto; }
.cpt { margin-left: 3px; line-height: 9px; }
.cpt small { display: block; font: 8.500px/9px "Liberation Sans", sans-serif; padding-left: 11px; }
.cpt b { display: block; font: 900 14px/13px Lato, sans-serif; letter-spacing: 0.25px; }
.cpt b span { font-size: 12px; }

.taskbar { height: 40px; background: linear-gradient(90deg, #0a0a0a 58%, #232a03 68%, #2c2605 80%, #12140a 92%, #080808); position: relative; display: flex; align-items: center; color: #fff; font: 12px "Open Sans", "Noto Sans", sans-serif; }
.start { width: 48px; padding-left: 16px; }
.tsearch { width: 344px; height: 40px; background: #f1f1f1; border-top: 1px solid #bbb; display: flex; align-items: center; padding: 0 15px 0 10px; color: #333; font-size: 14px; letter-spacing: -0.02px; }
.tsearch i { width: 21px; height: 21px; border: 3px solid #111; border-radius: 50%; margin-right: 9px; }
.tsearch svg { margin-left: auto; }
.apps { display: flex; height: 40px; }
.app { width: 49.080px; display: flex; align-items: center; justify-content: center; border: solid transparent; border-width: 2px 5px 2px 4px; }
.apps .app:first-child { width: 50px; }
.act { background: #3a3a3a padding-box; border-bottom-color: #76b9ed; border-left: 0; border-right: 0; }
.run { background: linear-gradient(#76b9ed, #76b9ed) bottom / 100% 2px no-repeat border-box; border-left: 0; border-right: 0; background-size: 40px 2px; }
.tray { position: absolute; left: 1693px; top: 13px; }
.clock { position: absolute; left: 1792px; width: 80px; text-align: center; line-height: 18px; font-size: 11.500px; letter-spacing: -0.3px; }
.notif { position: absolute; left: 1879px; top: 12px; }
.taskbar::after { content: ""; position: absolute; left: 1915px; top: 0; width: 1px; height: 40px; background: #777; }
.chat { position: absolute; left: 1121px; top: 0; display: flex; width: 664px; height: 23px; }
.chat1 { width: 266px; background: #fff; display: flex; padding-left: 13px; color: #777; font-size: 13px; line-height: 17px; letter-spacing: 0.2px; overflow: hidden; }
.chat1 span { margin-left: 15px; }
.chat2 { width: 398px; background: #eee; border-left: 1px solid #ddd; }
```
